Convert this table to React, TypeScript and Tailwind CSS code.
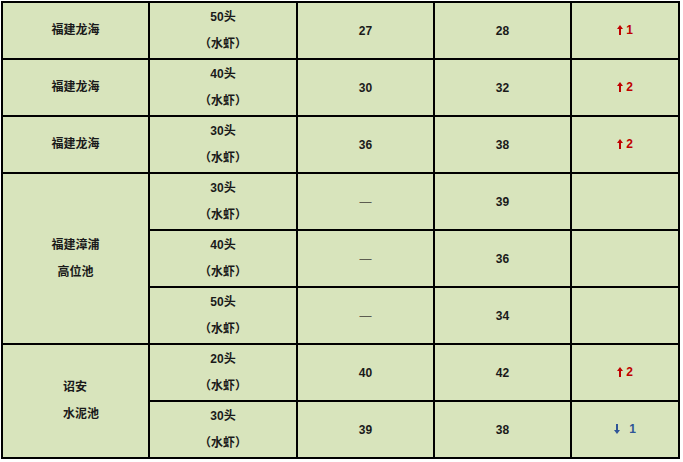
type Row = {
  place?: { lines: string[]; span: number; indent?: boolean }
  size: string
  before: string
  now: string
  change?: { dir: "up" | "down"; n: number }
}

const rows: Row[] = [
  { place: { lines: ["福建龙海"], span: 1 }, size: "50头", before: "27", now: "28", change: { dir: "up", n: 1 } },
  { place: { lines: ["福建龙海"], span: 1 }, size: "40头", before: "30", now: "32", change: { dir: "up", n: 2 } },
  { place: { lines: ["福建龙海"], span: 1 }, size: "30头", before: "36", now: "38", change: { dir: "up", n: 2 } },
  { place: { lines: ["福建漳浦", "高位池"], span: 3 }, size: "30头", before: "—", now: "39" },
  { size: "40头", before: "—", now: "36" },
  { size: "50头", before: "—", now: "34" },
  { place: { lines: ["诏安", "水泥池"], span: 2, indent: true }, size: "20头", before: "40", now: "42", change: { dir: "up", n: 2 } },
  { size: "30头", before: "39", now: "38", change: { dir: "down", n: 1 } },
]

function Arrow({ dir }: { dir: "up" | "down" }) {
  return (
    <svg width="6" height="10" viewBox="0 0 6 10" className={dir === "down" ? "rotate-180" : ""}>
      <path d="M3 0 L6 4 L4 4 L4 10 L2 10 L2 4 L0 4 Z" fill="currentColor" />
    </svg>
  )
}

const cell = "border-2 border-black p-0 text-center align-middle"

export default function App() {
  return (
    <div
      className="min-h-screen bg-white pl-[1px] pt-[1px] text-[12px] font-bold text-[#1a1a1a]"
      style={{ fontFamily: '"Liberation Sans", "Noto Sans CJK SC", sans-serif' }}
    >
      <table className="table-fixed border-collapse bg-[#d8e4bc] w-[679px]">
        <colgroup>
          <col className="w-[147px]" />
          <col className="w-[148px]" />
          <col className="w-[137px]" />
          <col className="w-[137px]" />
          <col className="w-[108px]" />
        </colgroup>
        <tbody>
          {rows.map((r, i) => (
            <tr key={i} className="h-[57px]">
              {r.place && (
                <td rowSpan={r.place.span} className={cell + " leading-[27px]"}>
                  {r.place.indent ? (
                    <div className="pl-[60px] text-left">
                      {r.place.lines.map((l) => (
                        <div key={l}>{l}</div>
                      ))}
                    </div>
                  ) : (
                    r.place.lines.map((l) => <div key={l}>{l}</div>)
                  )}
                </td>
              )}
              <td className={cell + " leading-[27px]"}>
                <div>{r.size}</div>
                <div>（水虾）</div>
              </td>
              <td className={cell}>
                {r.before === "—" ? (
                  <span className="font-normal text-[#5c5c50]">—</span>
                ) : (
                  r.before
                )}
              </td>
              <td className={cell}>{r.now}</td>
              <td className={cell}>
                {r.change && (
                  <span
                    className={
                      r.change.dir === "up"
                        ? "inline-flex items-center gap-[3px] text-[#c00000]"
                        : "inline-flex items-center gap-[9px] text-[#2f5597]"
                    }
                  >
                    <Arrow dir={r.change.dir} />
                    {r.change.n}
                  </span>
                )}
              </td>
            </tr>
          ))}
        </tbody>
      </table>
    </div>
  )
}
